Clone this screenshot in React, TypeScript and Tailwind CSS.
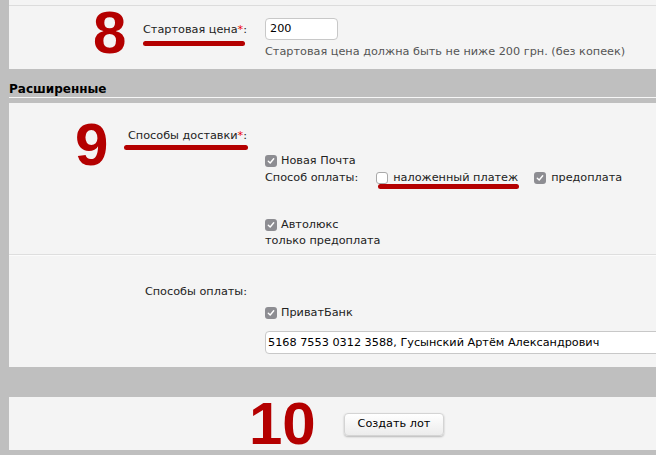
import React from "react";

const red = "text-[#b40000]";

function Check({ checked }: { checked?: boolean }) {
  if (checked) {
    return (
      <span className="inline-flex h-[12px] w-[12px] shrink-0 items-center justify-center rounded-[3px] bg-[#8d8d92]">
        <svg width="8" height="8" viewBox="0 0 8 8">
          <path d="M1.3 4.2 L3.2 6 L6.7 1.8" fill="none" stroke="#fff" strokeWidth="1.4" strokeLinecap="round" strokeLinejoin="round" />
        </svg>
      </span>
    );
  }
  return <span className="inline-block h-[12px] w-[12px] shrink-0 rounded-[3px] border border-[#a9a9a9] bg-white" />;
}

export default function App() {
  return (
    <div className="min-h-[455px] w-[656px] overflow-hidden bg-[#bfbfbf] pl-[9px] text-[11.25px] text-[#222] font-['DejaVu_Sans',sans-serif]">
      <div className="h-[5px] bg-[#f4f4f4]" />
      {/* стартовая цена */}
      <section className="relative h-[64px] border-t border-[#dcdcdc] bg-[#f4f4f4]">
        <span className={`absolute left-[84px] top-[3px] font-['Liberation_Sans',sans-serif] text-[60px] font-bold leading-[48px] ${red}`}>8</span>
        <div className="flex pt-[12px]">
          <div className="relative w-[240px] shrink-0 pt-[4px] pr-[2px] text-right leading-[16px]">
            Стартовая цена<span className="text-[#e00]">*</span>:
            <span className="absolute left-[134px] top-[23px] h-[5px] w-[102px] rounded-full bg-[#b40000]" />
          </div>
          <div className="ml-[16px]">
            <div className="flex h-[22px] w-[73px] items-center rounded-[4px] border border-[#c8c8c8] bg-white px-[4px] text-black">200</div>
            <div className="mt-[4px] whitespace-nowrap leading-[16px] text-[#555]">Стартовая цена должна быть не ниже 200 грн. (без копеек)</div>
          </div>
        </div>
      </section>

      <div className="flex h-[29px] items-center border-b border-[#f6f6f6] pt-[11px] text-[12px] font-bold text-black">Расширенные</div>
      <div className="h-[5px]" />

      <section className="bg-[#f4f4f4]">
        <div className="relative flex h-[152px] border-b border-[#dedede]">
          <span className={`absolute left-[66px] top-[18px] font-['Liberation_Sans',sans-serif] text-[60px] font-bold leading-[48px] ${red}`}>9</span>
          <div className="relative w-[240px] shrink-0 pt-[25px] pr-[2px] text-right leading-[16px]">
            Способы доставки<span className="text-[#e00]">*</span>:
            <span className="absolute left-[115px] top-[42px] h-[5px] w-[124px] rounded-full bg-[#b40000]" />
          </div>
          <div className="ml-[16px] pt-[49px] leading-[17px]">
            <div className="flex items-center gap-[4px]"><Check checked />Новая Почта</div>
            <div className="flex items-center whitespace-nowrap">
              <span>Способ оплаты:</span>
              <span className="relative ml-[18px] flex items-center gap-[5px]">
                <Check />наложенный платеж
                <span className="absolute left-[2px] top-[15px] h-[5px] w-[141px] rounded-full bg-[#b40000]" />
              </span>
              <span className="ml-[16px] flex items-center gap-[5px]"><Check checked />предоплата</span>
            </div>
            <div className="mt-[31px] flex items-center gap-[4px] leading-[16px]"><Check checked />Автолюкс</div>
            <div className="leading-[16px]">только предоплата</div>
          </div>
        </div>
        <div className="flex h-[112px] border-t border-[#fbfbfb]">
          <div className="w-[240px] shrink-0 pt-[28px] pr-[2px] text-right leading-[16px]">Способы оплаты:</div>
          <div className="ml-[16px] min-w-0 grow pt-[49px] leading-[16px]">
            <div className="flex items-center gap-[4px]"><Check checked />ПриватБанк</div>
            <div className="mt-[10px] flex h-[23px] w-[420px] items-center whitespace-nowrap rounded-l-[4px] border border-[#c8c8c8] bg-white px-[2px] text-black">
              5168 7553 0312 3588, Гусынский Артём Александрович
            </div>
          </div>
        </div>
      </section>

      <div className="h-[30px]" />

      <section className="relative flex h-[53px] bg-[#f4f4f4] pl-[335px] pt-[16px]">
        <span className={`absolute left-[240px] top-[3px] font-['Liberation_Sans',sans-serif] text-[60px] font-bold leading-[48px] ${red}`}>10</span>
        <button className="flex h-[23px] w-[100px] items-center justify-center rounded-[4px] border border-[#d4d4d4] bg-gradient-to-b from-white to-[#ececec] text-[11.25px] text-black shadow-[0_1px_2px_rgba(0,0,0,0.25)]">
          Создать лот
        </button>
      </section>
    </div>
  );
}
